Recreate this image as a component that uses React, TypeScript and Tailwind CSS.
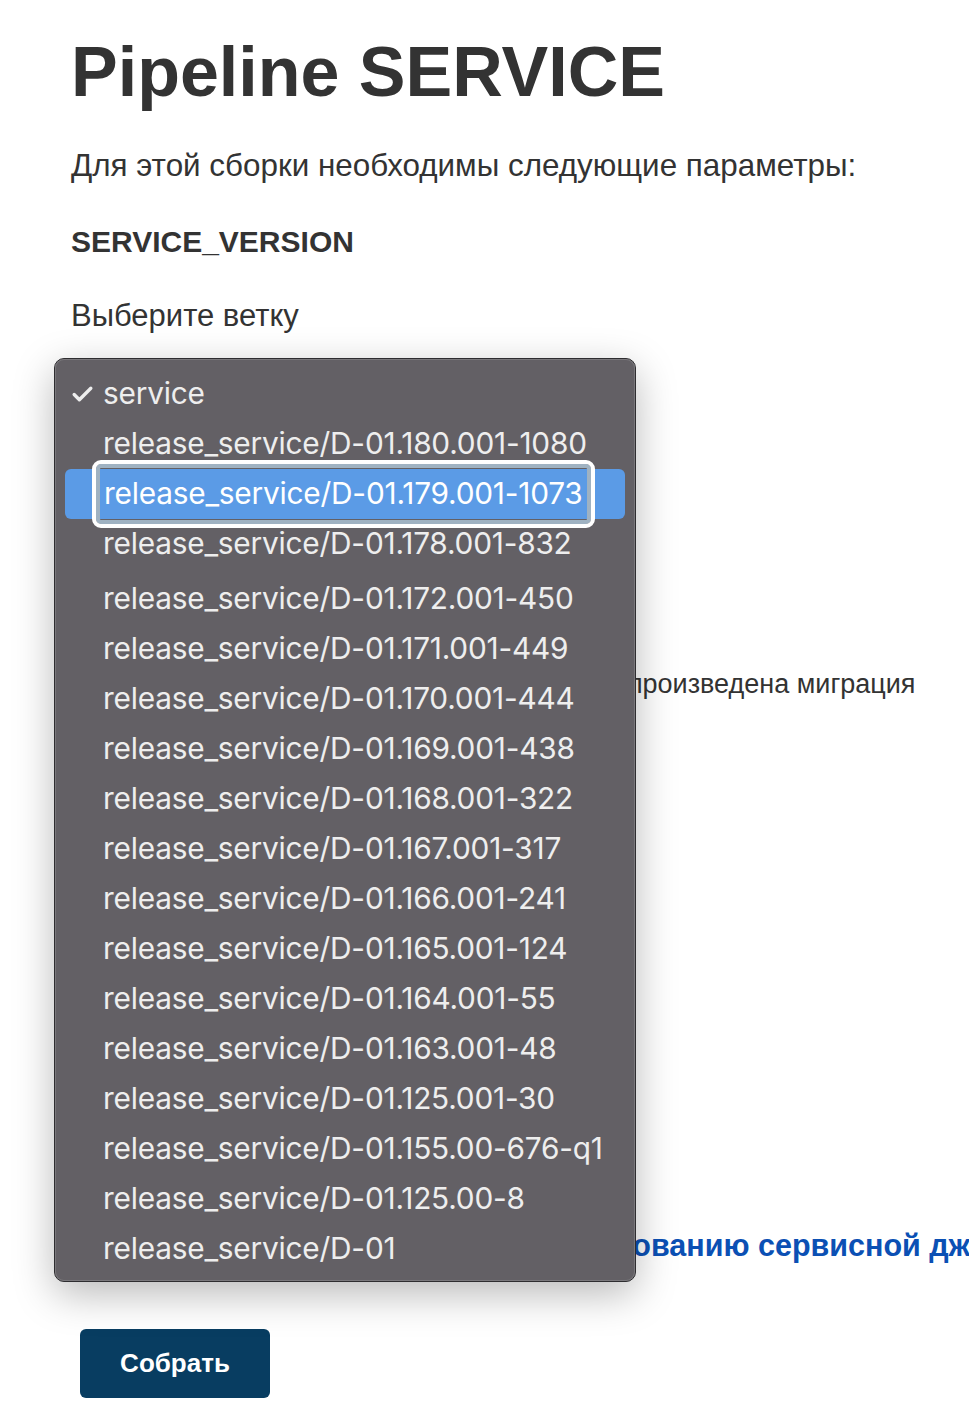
import { Check } from "lucide-react";

const branches = [
  "release_service/D-01.180.001-1080",
  "release_service/D-01.179.001-1073",
  "release_service/D-01.178.001-832",
  "release_service/D-01.172.001-450",
  "release_service/D-01.171.001-449",
  "release_service/D-01.170.001-444",
  "release_service/D-01.169.001-438",
  "release_service/D-01.168.001-322",
  "release_service/D-01.167.001-317",
  "release_service/D-01.166.001-241",
  "release_service/D-01.165.001-124",
  "release_service/D-01.164.001-55",
  "release_service/D-01.163.001-48",
  "release_service/D-01.125.001-30",
  "release_service/D-01.155.00-676-q1",
  "release_service/D-01.125.00-8",
  "release_service/D-01",
];

function BranchMenu() {
  return (
    <div className="absolute left-[54px] top-[358px] w-[582px] h-[924px] rounded-[10px] border border-[#2e2d30] bg-[#636065] shadow-[0_12px_40px_rgba(0,0,0,0.28)] font-['Inter',sans-serif] text-[29.8px] tracking-[-0.2px] text-[#eeeeee]">
      <div className="h-full rounded-[9px] ring-1 ring-inset ring-[#7a787c] pt-[10px] px-[10px]">
        <div className="flex h-[50px] items-center">
          <span className="flex w-[38px] justify-start pl-[5px]">
            <Check className="h-[25px] w-[25px]" strokeWidth={3.2} />
          </span>
          <span className="-mt-[2px]">service</span>
        </div>
        {branches.map((b, i) => {
          const active = i === 1;
          return (
            <div
              key={b}
              className={
                "flex h-[50px] items-center " +
                (i === 3 ? "mt-[5px] " : "") +
                (active ? "rounded-[6px] bg-[#5b9be6] text-white" : "")
              }
            >
              {active ? (
                <span className="ml-[27px] -my-[9px] flex h-[68px] items-center rounded-[9px] border-[4px] border-white px-[8px] ring-[4px] ring-inset ring-[#9fb2c2]">
                  <span className="-mt-[1px]">{b}</span>
                </span>
              ) : (
                <span className="-mt-[1px] pl-[38px]">{b}</span>
              )}
            </div>
          );
        })}
      </div>
    </div>
  );
}

export default function App() {
  return (
    <div className="relative min-h-[1412px] w-[969px] overflow-hidden bg-white font-['Liberation_Sans',Arial,sans-serif] text-[#333333]">
      <div className="pl-[71px] pt-[30px]">
        <h1 className="text-[70px] font-bold leading-[84px]">Pipeline SERVICE</h1>
        <p className="mt-[35px] text-[31.4px] leading-[34px]">Для этой сборки необходимы следующие параметры:</p>
        <h2 className="mt-[42px] text-[30px] font-bold leading-[34px]">SERVICE_VERSION</h2>
        <p className="mt-[40px] text-[31px] leading-[34px]">Выберите ветку</p>

        <div className="mt-[50px] h-[52px] w-[520px] rounded-[4px] border border-[#cccccc]" />

        <div className="mt-[234px] w-[841px] text-right text-[27px] leading-[30px] whitespace-nowrap">
          Для выбранной ветки сервиса должна быть произведена миграция
        </div>

        <div className="mt-[529px] w-[962px] whitespace-nowrap text-right text-[30.5px] font-bold leading-[34px] text-[#0b50b4]">
          Ссылка на инструкцию по использованию сервисной джобы
        </div>

        <button className="ml-[9px] mt-[67px] flex h-[69px] w-[190px] items-center justify-center rounded-[6px] bg-[#083d61] text-[26px] font-bold text-white">
          Собрать
        </button>
      </div>

      <BranchMenu />
    </div>
  );
}
